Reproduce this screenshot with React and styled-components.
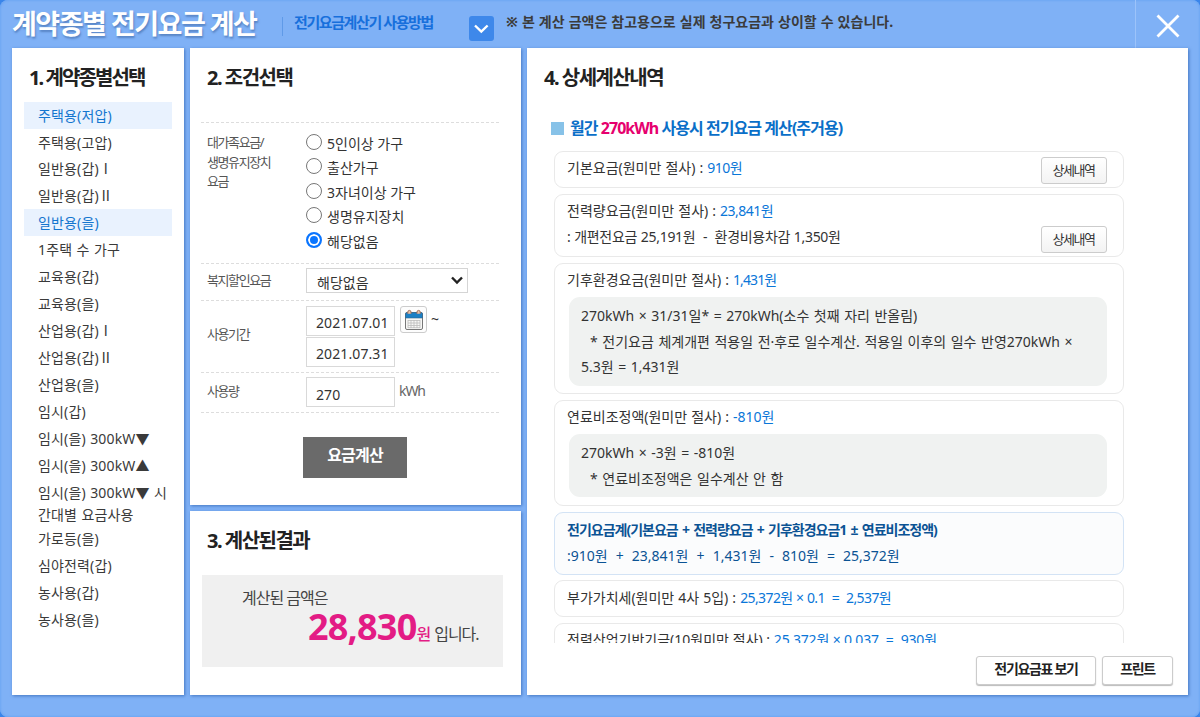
import styled, {createGlobalStyle} from 'styled-components';

const contractTypes = [
  {label: '주택용(저압)', active: true},
  {label: '주택용(고압)'},
  {label: '일반용(갑)Ⅰ'},
  {label: '일반용(갑)Ⅱ'},
  {label: '일반용(을)', active: true},
  {label: '1주택 수 가구'},
  {label: '교육용(갑)'},
  {label: '교육용(을)'},
  {label: '산업용(갑)Ⅰ'},
  {label: '산업용(갑)Ⅱ'},
  {label: '산업용(을)'},
  {label: '임시(갑)'},
  {label: '임시(을) 300kW', mark: '▼'},
  {label: '임시(을) 300kW', mark: '▲'},
  {label: '임시(을) 300kW', mark: '▼', tail: ' 시', second: '간대별 요금사용'},
  {label: '가로등(을)'},
  {label: '심야전력(갑)'},
  {label: '농사용(갑)'},
  {label: '농사용(을)'},
];

const households = ['5인이상 가구', '출산가구', '3자녀이상 가구', '생명유지장치', '해당없음'];

function App() {
  return (
    <Window>
      <GlobalStyle />
      <Header>
        <Title>계약종별 전기요금 계산</Title>
        <Guide>전기요금계산기 사용방법</Guide>
        <GuideToggle aria-label="사용방법 열기">
          <svg width="25" height="24" viewBox="0 0 25 24">
            <path d="M6 9.5l6.3 6 6.3-6" fill="none" stroke="#fff" strokeWidth="2.4" />
          </svg>
        </GuideToggle>
        <Notice>※ 본 계산 금액은 참고용으로 실제 청구요금과 상이할 수 있습니다.</Notice>
        <CloseButton aria-label="닫기">
          <svg width="24" height="24" viewBox="0 0 24 24">
            <path d="M1.5 1.5l21 21M22.5 1.5l-21 21" stroke="#fff" strokeWidth="2.8" />
          </svg>
        </CloseButton>
      </Header>
      <Columns>
        <TypePanel>
          <Heading $spacing={-1.9}>1. 계약종별선택</Heading>
          <TypeList>
            {contractTypes.map((type, index) => (
              <TypeItem key={index} $active={type.active} $tall={Boolean(type.second)}>
                {type.label}
                {type.mark && <Mark>{type.mark}</Mark>}
                {type.tail}
                {type.second && (
                  <>
                    <br />
                    {type.second}
                  </>
                )}
              </TypeItem>
            ))}
          </TypeList>
        </TypePanel>
        <MiddleColumn>
          <ConditionPanel>
            <Heading>2. 조건선택</Heading>
            <Form>
              <Row $height={141}>
                <RowLabel $top={10}>
                  대가족요금/
                  <br />
                  생명유지장치
                  <br />
                  요금
                </RowLabel>
                <RadioList>
                  {households.map(name => (
                    <RadioLabel key={name}>
                      <Radio $checked={name === '해당없음'} />
                      <span>{name}</span>
                    </RadioLabel>
                  ))}
                </RadioList>
              </Row>
              <Row $height={37}>
                <RowLabel $top={7}>복지할인요금</RowLabel>
                <Select>
                  <SelectText>해당없음</SelectText>
                  <svg width="12" height="9" viewBox="0 0 12 9">
                    <path d="M1 1.5l5 5 5-5" fill="none" stroke="#222" strokeWidth="2.4" />
                  </svg>
                </Select>
              </Row>
              <Row $height={72}>
                <RowLabel $top={24}>사용기간</RowLabel>
                <Dates>
                  <Field>2021.07.01</Field>
                  <Field>2021.07.31</Field>
                </Dates>
                <CalendarButton aria-label="달력">
                  <CalendarIcon />
                </CalendarButton>
                <Tilde>~</Tilde>
              </Row>
              <Row $height={40}>
                <RowLabel $top={9}>사용량</RowLabel>
                <Usage>
                  <Field $low>270</Field>
                </Usage>
                <Unit>kWh</Unit>
              </Row>
            </Form>
            <CalculateButton>요금계산</CalculateButton>
          </ConditionPanel>
          <ResultPanel>
            <Heading>3. 계산된결과</Heading>
            <ResultBox>
              <ResultIntro>계산된 금액은</ResultIntro>
              <ResultLine>
                <Amount>28,830</Amount>
                <Won>원</Won>
                <span>입니다.</span>
              </ResultLine>
            </ResultBox>
          </ResultPanel>
        </MiddleColumn>
        <DetailPanel>
          <Heading>4. 상세계산내역</Heading>
          <SubHeading>
            월간 <em>270kWh</em> 사용시 전기요금 계산(주거용)
          </SubHeading>
          <CardList>
            <Card $height={37} $top={3}>
              <Line>
                기본요금(원미만 절사) : <Value>910원</Value>
              </Line>
              <DetailButton>상세내역</DetailButton>
            </Card>
            <Card $height={63} $top={3}>
              <Line>
                전력량요금(원미만 절사) : <Value>23,841원</Value>
              </Line>
              <Line $spacing={-0.3}>: 개편전요금 25,191원&nbsp; -&nbsp; 환경비용차감 1,350원</Line>
              <DetailButton>상세내역</DetailButton>
            </Card>
            <Card $height={131} $top={3}>
              <Line>
                기후환경요금(원미만 절사) : <Value $spacing={-0.9}>1,431원</Value>
              </Line>
              <Formula $height={89}>
                270kWh × 31/31일* = 270kWh(소수 첫째 자리 반올림)
                <br />
                &nbsp; * 전기요금 체계개편 적용일 전·후로 일수계산. 적용일 이후의 일수 반영270kWh ×
                <br />
                5.3원 = 1,431원
              </Formula>
            </Card>
            <Card $height={106} $top={3}>
              <Line>
                연료비조정액(원미만 절사) : <Value $spacing={0}>-810원</Value>
              </Line>
              <Formula $height={63}>
                270kWh × -3원 = -810원
                <br />
                &nbsp; * 연료비조정액은 일수계산 안 함
              </Formula>
            </Card>
            <TotalCard $height={63} $top={4}>
              <TotalLine>전기요금계(기본요금 + 전력량요금 + 기후환경요금1 ± 연료비조정액)</TotalLine>
              <Line>:910원&nbsp; +&nbsp; 23,841원&nbsp; +&nbsp; 1,431원&nbsp; -&nbsp; 810원&nbsp; =&nbsp; 25,372원</Line>
            </TotalCard>
            <Card $height={37} $top={4}>
              <Line>
                부가가치세(원미만 4사 5입) : <Value $spacing={-0.6}>25,372원 × 0.1&nbsp; =&nbsp; 2,537원</Value>
              </Line>
            </Card>
            <Card $height={37} $top={3}>
              <Line $words={0.1}>
                전력산업기반기금(10원미만 절사) : <Value $spacing={-0.2}>25,372원 × 0.037&nbsp; =&nbsp; 930원</Value>
              </Line>
            </Card>
          </CardList>
          <Footer>
            <FooterButton $width={120}>전기요금표 보기</FooterButton>
            <FooterButton $width={71}>프린트</FooterButton>
          </Footer>
        </DetailPanel>
      </Columns>
    </Window>
  );
}

function CalendarIcon() {
  return (
    <svg width="20" height="22" viewBox="0 0 20 22">
      <rect x="1.5" y="3.5" width="17" height="17" rx="1.5" fill="#f7f7f5" stroke="#777" />
      <path d="M1.5 9V5q0-1.5 1.5-1.5h14q1.5 0 1.5 1.5v4z" fill="#1b7fc4" stroke="#35658a" strokeWidth=".6" />
      <path d="M4 11.5h12M4 14h12M4 16.5h12M4 18.7h12M4 11v8M7 11v8M10 11v8M13 11v8M16 11v8" stroke="#bbb" strokeWidth=".8" />
      <path d="M3.8 4.8V3a1.6 1.6 0 013.2 0v1.8M13 4.8V3a1.6 1.6 0 013.2 0v1.8" fill="#e8c1a8" stroke="#a0705a" />
    </svg>
  );
}

const GlobalStyle = createGlobalStyle`
  * {
    box-sizing: border-box;
  }

  body {
    margin: 0;
    background-color: #3a85ea;
    color: #333;
    font-family: 'Noto Sans', 'Noto Sans CJK KR', sans-serif;
    font-size: 14px;
  }

  button {
    font-family: inherit;
    padding: 0;
  }
`;

const Window = styled.main`
  width: 1200px;
  height: 717px;
  overflow: hidden;
  border-radius: 8px;
  background-color: #7fb1f6;
  box-shadow: inset 0 0 2px 1px #6ea7f3;
`;

const Header = styled.header`
  display: flex;
  height: 48px;
  padding-left: 12px;
  white-space: nowrap;
`;

const Title = styled.h1`
  width: 270px;
  margin: 0;
  color: #fff;
  font-size: 27px;
  font-weight: 700;
  letter-spacing: -1.5px;
  line-height: 48px;
  text-shadow: 1px 2px 2px rgba(50, 90, 150, 0.5);
`;

const Guide = styled.a`
  width: 187px;
  height: 19px;
  margin-top: 17px;
  padding-left: 11px;
  border-left: 1px solid #5f9ae8;
  color: #176fdc;
  font-size: 15px;
  font-weight: 700;
  letter-spacing: -1.4px;
  line-height: 11px;
`;

const GuideToggle = styled.button`
  width: 25px;
  height: 25px;
  margin-top: 16px;
  border: 0;
  border-radius: 3px;
  background-color: #3e88ea;
`;

const Notice = styled.p`
  flex: 1;
  margin: 0 0 0 12px;
  color: #3b3b3b;
  font-weight: 700;
  line-height: 43px;
  word-spacing: 0.4px;
`;

const CloseButton = styled.button`
  width: 65px;
  height: 48px;
  padding: 8px 0 0;
  border: 0;
  border-left: 1px solid #9cc3fa;
  background: none;
`;

const Columns = styled.div`
  display: flex;
  gap: 6px;
  height: 647px;
  padding-left: 12px;
`;

const Panel = styled.section`
  background-color: #fff;
  padding-top: 16px;
  box-shadow: 1px 1px 3px rgba(30, 80, 160, 0.6);
`;

const TypePanel = styled(Panel)`
  width: 172px;
`;

const MiddleColumn = styled.div`
  display: flex;
  flex-direction: column;
  gap: 6px;
  width: 331px;
`;

const ConditionPanel = styled(Panel)`
  height: 457px;
`;

const ResultPanel = styled(Panel)`
  flex: 1;
`;

const DetailPanel = styled(Panel)`
  width: 661px;
`;

const Heading = styled.h2`
  margin: 0;
  padding-left: 17px;
  color: #222;
  font-size: 20px;
  font-weight: 700;
  letter-spacing: ${({$spacing = -1.5}) => $spacing}px;
  line-height: 28px;
`;

const TypeList = styled.ul`
  width: 148px;
  margin: 9.6px 0 0 12px;
  padding: 0;
  list-style: none;
`;

const TypeItem = styled.li`
  height: ${({$tall}) => ($tall ? '46.5px' : '26.95px')};
  padding: 3px 0 2px 14px;
  background-color: ${({$active}) => ($active ? '#e9f2fe' : 'transparent')};
  color: ${({$active}) => ($active ? '#1476cf' : '#3a3a3a')};
  line-height: 22px;
  letter-spacing: 0.15px;
  word-spacing: 0.6px;
  white-space: nowrap;
`;

const Mark = styled.span`
  font-size: 14px;
`;

const Form = styled.div`
  width: 298px;
  margin: 30px 0 0 11px;
  border-top: 1px dashed #ddd;
`;

const Row = styled.div`
  display: flex;
  height: ${({$height}) => $height}px;
  border-bottom: 1px dashed #ddd;
`;

const RowLabel = styled.div`
  width: 105px;
  padding: ${({$top}) => $top}px 0 0 6px;
  color: #555;
  font-size: 13px;
  letter-spacing: -1.4px;
  line-height: 19.5px;
`;

const RadioList = styled.div`
  padding-top: 9px;
`;

const RadioLabel = styled.label`
  display: flex;
  gap: 5px;
  height: 24.4px;
  line-height: 24px;
`;

const Radio = styled.i`
  width: 16px;
  height: 16px;
  margin-top: 2px;
  border: ${({$checked}) => ($checked ? '2px solid #0a75ff' : '1px solid #777')};
  border-radius: 50%;
  background-color: ${({$checked}) => ($checked ? '#0a75ff' : '#fff')};
  box-shadow: ${({$checked}) => ($checked ? 'inset 0 0 0 2px #fff' : 'none')};
`;

const Select = styled.div`
  display: flex;
  align-items: center;
  justify-content: space-between;
  width: 162px;
  height: 25px;
  margin-top: 4px;
  padding: 0 4px 0 10px;
  border: 1px solid #d5d5d5;
`;

const SelectText = styled.span`
  height: 19px;
  overflow: hidden;
  line-height: 23px;
`;

const Dates = styled.div`
  display: flex;
  flex-direction: column;
  gap: 1px;
  padding-top: 5px;
`;

const Field = styled.div`
  width: 89px;
  height: 30px;
  padding-left: 9px;
  border: 1px solid #d9d9d9;
  letter-spacing: 0.1px;
  line-height: ${({$low}) => ($low ? 33 : 31)}px;
`;

const CalendarButton = styled.button`
  display: flex;
  align-items: center;
  justify-content: center;
  width: 27px;
  height: 27px;
  margin: 5px 0 0 5px;
  border: 1px solid #ccc;
  border-radius: 3px;
  background-color: #fdfdfd;
`;

const Tilde = styled.span`
  margin-left: 4px;
  line-height: 36px;
`;

const Usage = styled.div`
  padding-top: 4px;
`;

const Unit = styled.span`
  margin-left: 4px;
  color: #666;
  letter-spacing: -1.1px;
  line-height: 36px;
`;

const CalculateButton = styled.button`
  display: block;
  width: 104px;
  height: 41px;
  margin: 24px 0 0 113px;
  padding-bottom: 7px;
  border: 0;
  background-color: #6a6a6a;
  color: #fff;
  font-size: 16px;
  font-weight: 700;
  letter-spacing: -0.8px;
`;

const ResultBox = styled.div`
  width: 301px;
  height: 92px;
  margin: 20px 0 0 12px;
  padding-top: 11px;
  background-color: #f0f0f0;
  color: #444;
  font-size: 16px;
  letter-spacing: -1px;
`;

const ResultIntro = styled.p`
  margin: 0;
  padding-left: 40px;
  line-height: 24px;
`;

const ResultLine = styled.p`
  display: flex;
  align-items: baseline;
  margin: 0;
  padding-left: 106px;
  line-height: 34px;
`;

const Amount = styled.strong`
  color: #e31c85;
  font-size: 36px;
  letter-spacing: -0.8px;
`;

const Won = styled.strong`
  margin-right: 4px;
  color: #e31c85;
  font-weight: 500;
`;

const SubHeading = styled.h3`
  display: flex;
  align-items: center;
  margin: 24px 0 0 24px;
  color: #0a6fc8;
  font-size: 16px;
  font-weight: 700;
  letter-spacing: -0.95px;
  line-height: 24px;
  white-space: pre;

  &::before {
    content: '';
    width: 13px;
    height: 13px;
    margin-right: 6px;
    background-color: #87c2e8;
  }

  em {
    color: #e6006e;
    font-style: normal;
  }
`;

const CardList = styled.div`
  display: flex;
  flex-direction: column;
  gap: 6px;
  width: 570px;
  height: 492px;
  margin: 11px 0 0 27px;
  overflow: hidden;
`;

const Card = styled.article`
  position: relative;
  flex: none;
  height: ${({$height}) => $height}px;
  padding: ${({$top}) => $top}px 0 0 12px;
  border: 1px solid #e9e9e9;
  border-radius: 9px;
  white-space: nowrap;
`;

const TotalCard = styled(Card)`
  margin-bottom: -1px;
  border-color: #d3e3f5;
  background-color: #fbfcfd;
  color: #0b5394;
`;

const Line = styled.p`
  margin: 0;
  letter-spacing: ${({$spacing = 0}) => $spacing}px;
  line-height: 26px;
  word-spacing: ${({$words = 0.4}) => $words}px;
`;

const TotalLine = styled(Line)`
  font-weight: 700;
  letter-spacing: -1px;
  word-spacing: 1.6px;
`;

const Value = styled.span`
  color: #0a76d8;
  letter-spacing: ${({$spacing = -0.5}) => $spacing}px;
`;

const Formula = styled.div`
  width: 538px;
  height: ${({$height}) => $height}px;
  margin: 4px 0 0 2px;
  padding: 6px 0 0 12px;
  border-radius: 11px;
  background-color: #f0f2f1;
  line-height: 25.6px;
  word-spacing: 0.9px;
`;

const DetailButton = styled.button`
  position: absolute;
  right: 16px;
  bottom: 3px;
  width: 66px;
  height: 27px;
  padding: 0 1px 2px 0;
  border: 1px solid #ccc;
  border-radius: 3px;
  background-image: linear-gradient(#fff, #f3f3f3);
  color: #333;
  font-size: 13px;
  letter-spacing: -1.4px;
`;

const Footer = styled.footer`
  display: flex;
  justify-content: flex-end;
  gap: 6px;
  padding: 13px 15px 0 0;
`;

const FooterButton = styled.button`
  width: ${({$width}) => $width}px;
  height: 29px;
  padding-bottom: 5px;
  border: 1px solid #ccc;
  border-radius: 3px;
  background-color: #fff;
  box-shadow: 0 1px 1px #bbb;
  color: #222;
  font-size: 14px;
  font-weight: 700;
  letter-spacing: -1.3px;
`;

export default App;
